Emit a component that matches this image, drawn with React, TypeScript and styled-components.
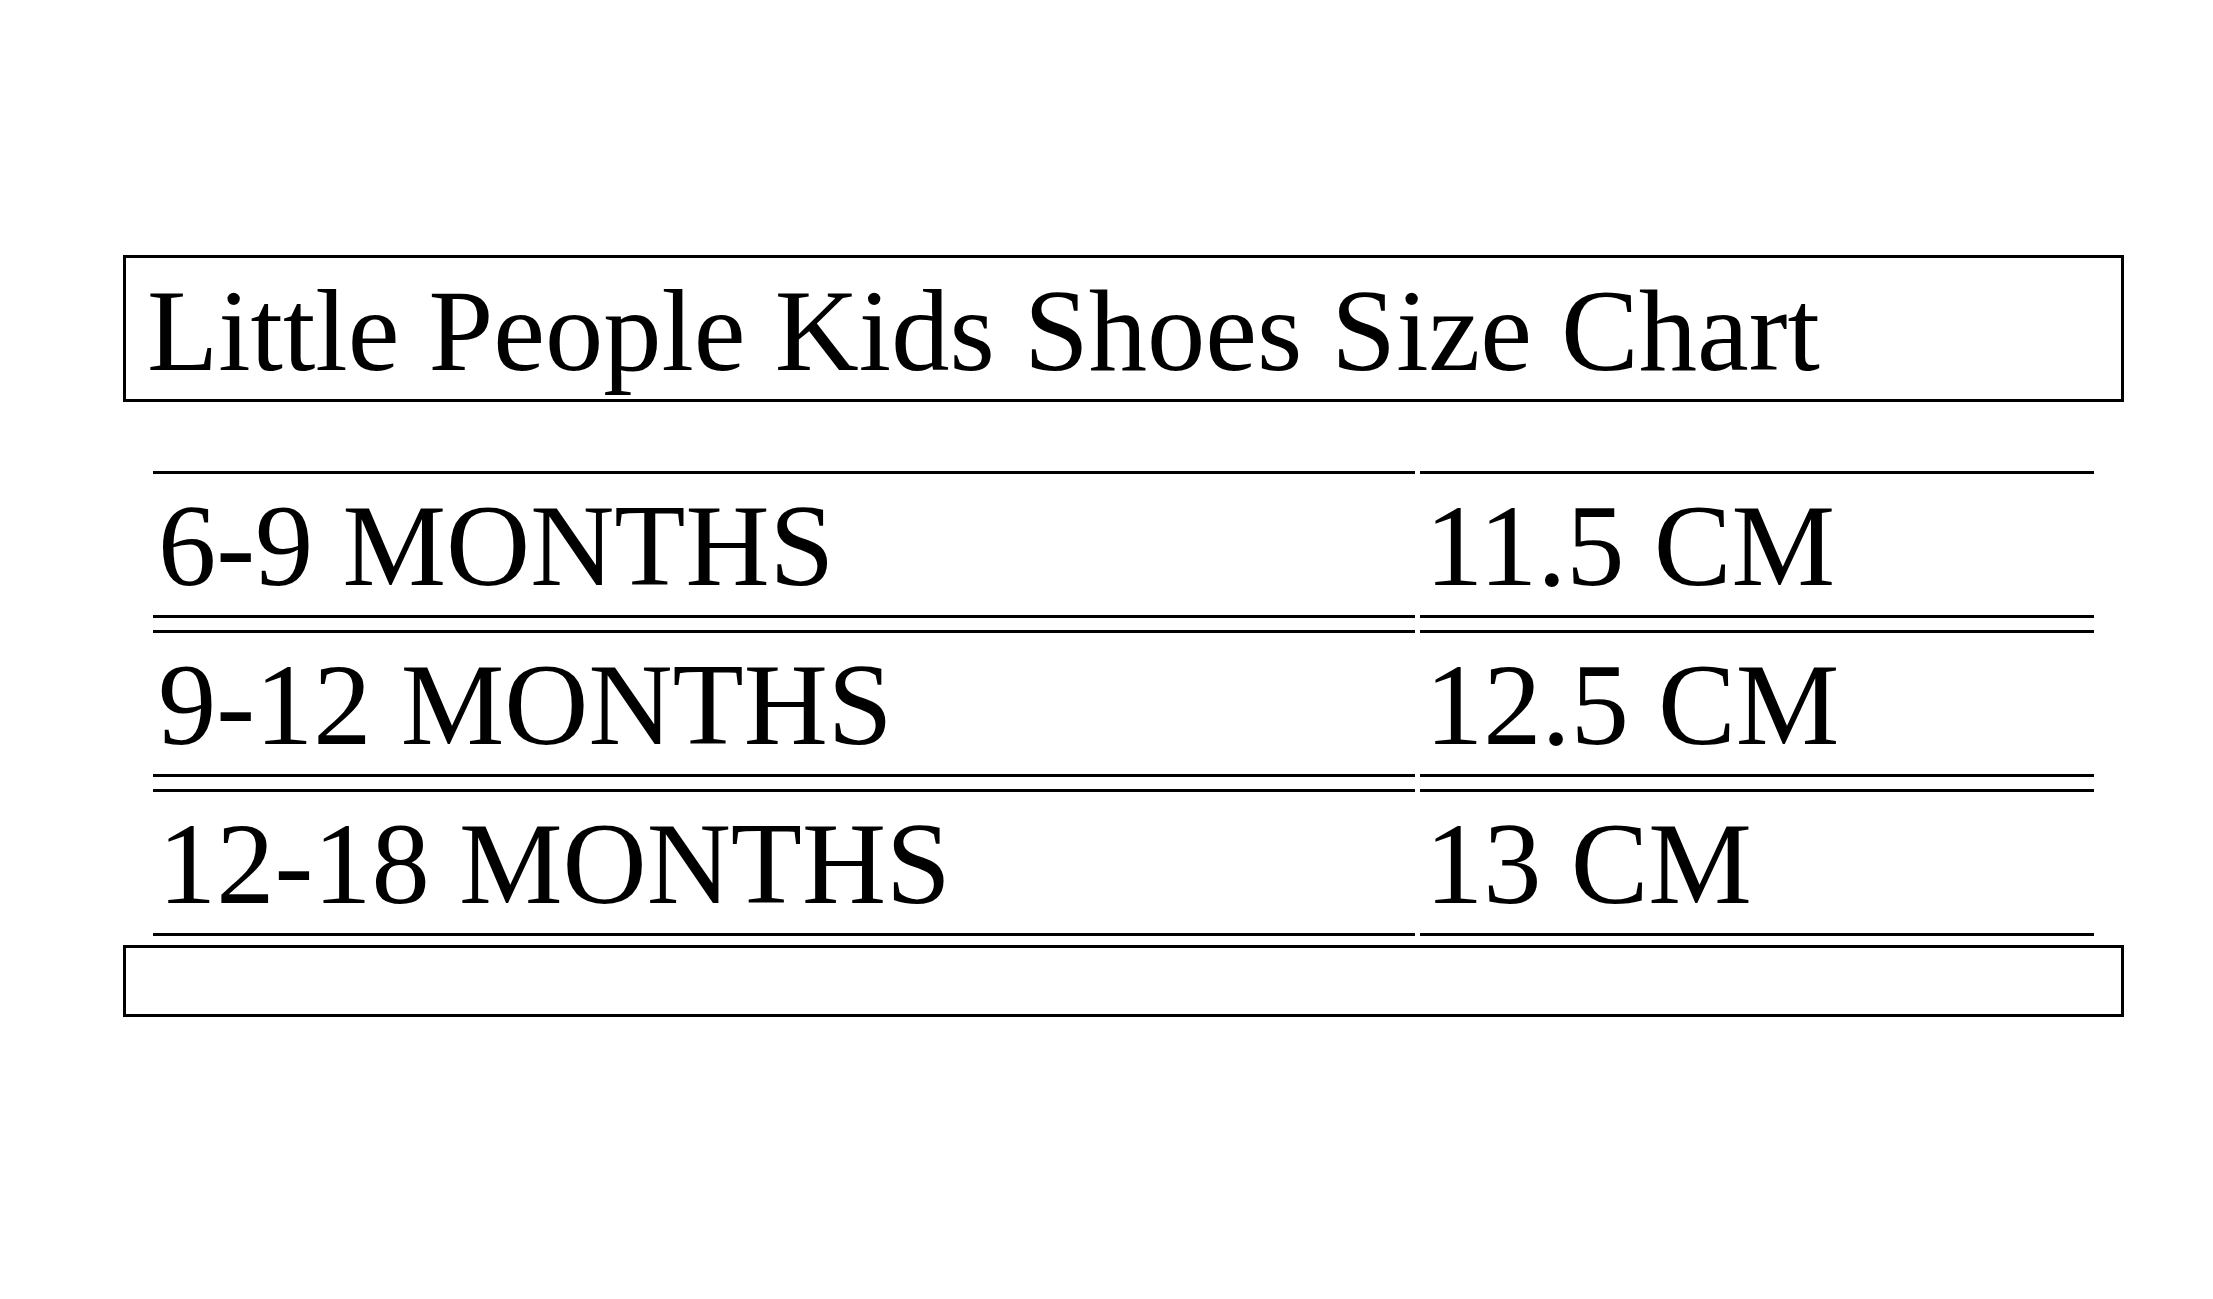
import React from "react";
import styled, { createGlobalStyle } from "styled-components";

const Global = createGlobalStyle`
  html, body { margin: 0; padding: 0; background: #ffffff; }
  body { font-family: "Liberation Serif", "Times New Roman", serif; color: #000; }
`;

const Page = styled.div`
  width: 2213px;
  height: 1299px;
  box-sizing: border-box;
  padding: 255px 0 0 123px;
  background: #fff;
`;

const Sheet = styled.div`
  width: 2001px;
  display: flex;
  flex-direction: column;
`;

const TitleBox = styled.div`
  box-sizing: border-box;
  height: 147px;
  border: 3px solid #000;
  padding: 15px 0 0 21px;
  font-size: 116.5px;
  line-height: 1;
  white-space: nowrap;
`;

const Table = styled.div`
  margin: 69px 0 0 30px;
  display: grid;
  grid-template-columns: 1262px 674px;
  column-gap: 5px;
  row-gap: 12px;
`;

const Cell = styled.div`
  box-sizing: border-box;
  height: 147px;
  border-top: 3px solid #000;
  border-bottom: 3px solid #000;
  padding: 14px 0 0 5px;
  font-size: 116.5px;
  line-height: 1;
  white-space: nowrap;
`;

const FooterBox = styled.div`
  box-sizing: border-box;
  height: 72px;
  margin-top: 9px;
  border: 3px solid #000;
`;

const rows: [string, string][] = [
  ["6-9 MONTHS", "11.5 CM"],
  ["9-12 MONTHS", "12.5 CM"],
  ["12-18 MONTHS", "13 CM"],
];

export default function App() {
  return (
    <>
      <Global />
      <Page>
        <Sheet>
          <TitleBox>Little People Kids Shoes Size Chart</TitleBox>
          <Table>
            {rows.map(([age, size]) => (
              <React.Fragment key={age}>
                <Cell>{age}</Cell>
                <Cell>{size}</Cell>
              </React.Fragment>
            ))}
          </Table>
          <FooterBox />
        </Sheet>
      </Page>
    </>
  );
}
